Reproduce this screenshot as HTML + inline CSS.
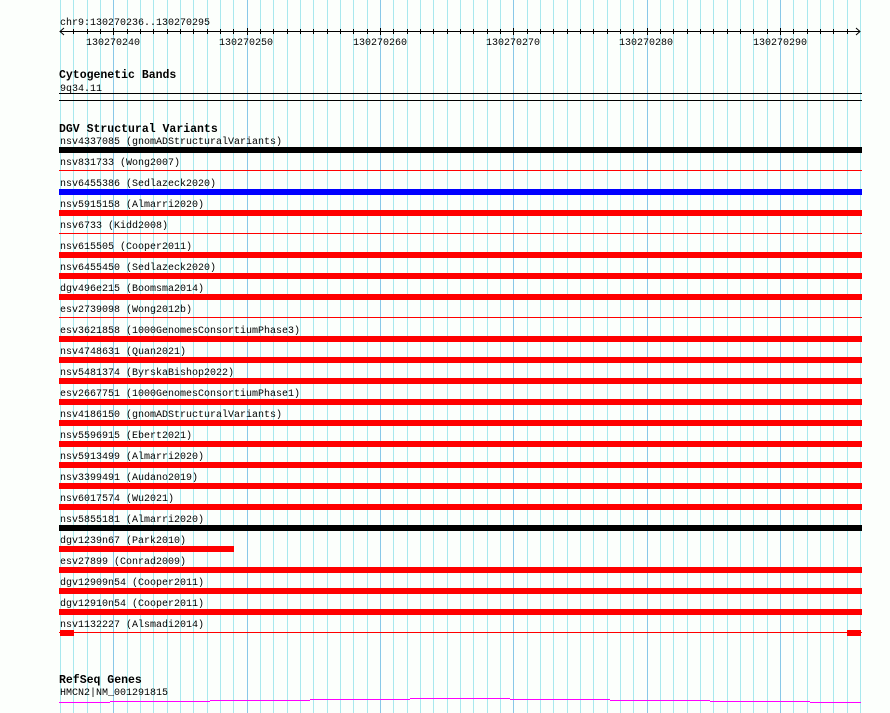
<!DOCTYPE html>
<html><head><style>html,body{margin:0;padding:0;background:#fcfffc;}svg{display:block}
text{font-family:"Liberation Mono",monospace;font-size:10px;fill:#000}
.b{font-weight:bold;font-size:11.5px}</style></head><body>
<svg width="890" height="713" xmlns="http://www.w3.org/2000/svg">
<rect width="890" height="713" fill="#fcfffc"/>
<path stroke="#a8e8ee" stroke-width="1" fill="none" d="M60.5 0V713M73.5 0V713M87.5 0V713M100.5 0V713M127.5 0V713M140.5 0V713M153.5 0V713M167.5 0V713M180.5 0V713M193.5 0V713M207.5 0V713M220.5 0V713M233.5 0V713M260.5 0V713M273.5 0V713M287.5 0V713M300.5 0V713M313.5 0V713M327.5 0V713M340.5 0V713M353.5 0V713M367.5 0V713M393.5 0V713M407.5 0V713M420.5 0V713M433.5 0V713M447.5 0V713M460.5 0V713M473.5 0V713M487.5 0V713M500.5 0V713M527.5 0V713M540.5 0V713M553.5 0V713M567.5 0V713M580.5 0V713M593.5 0V713M607.5 0V713M620.5 0V713M633.5 0V713M660.5 0V713M673.5 0V713M687.5 0V713M700.5 0V713M713.5 0V713M727.5 0V713M740.5 0V713M753.5 0V713M767.5 0V713M793.5 0V713M807.5 0V713M820.5 0V713M833.5 0V713M847.5 0V713M860.5 0V713"/>
<path stroke="#88c8e8" stroke-width="1" fill="none" d="M113.5 0V713M247.5 0V713M380.5 0V713M513.5 0V713M647.5 0V713M780.5 0V713"/>
<path stroke="#000" stroke-width="1" fill="none" d="M73.5 29V34M87.5 29V34M100.5 29V34M127.5 29V34M140.5 29V34M153.5 29V34M167.5 29V34M180.5 29V34M193.5 29V34M207.5 29V34M220.5 29V34M233.5 29V34M260.5 29V34M273.5 29V34M287.5 29V34M300.5 29V34M313.5 29V34M327.5 29V34M340.5 29V34M353.5 29V34M367.5 29V34M393.5 29V34M407.5 29V34M420.5 29V34M433.5 29V34M447.5 29V34M460.5 29V34M473.5 29V34M487.5 29V34M500.5 29V34M527.5 29V34M540.5 29V34M553.5 29V34M567.5 29V34M580.5 29V34M593.5 29V34M607.5 29V34M620.5 29V34M633.5 29V34M660.5 29V34M673.5 29V34M687.5 29V34M700.5 29V34M713.5 29V34M727.5 29V34M740.5 29V34M753.5 29V34M767.5 29V34M793.5 29V34M807.5 29V34M820.5 29V34M833.5 29V34M847.5 29V34M113.5 28V35M247.5 28V35M380.5 28V35M513.5 28V35M647.5 28V35M780.5 28V35"/>
<line x1="60" y1="31.5" x2="860" y2="31.5" stroke="#000"/>
<path d="M64 28 L60 31.5 L64 35 M856 28 L860 31.5 L856 35" stroke="#000" fill="none"/>
<text x="60" y="25">chr9:130270236..130270295</text>
<text x="86" y="45">130270240</text>
<text x="219" y="45">130270250</text>
<text x="353" y="45">130270260</text>
<text x="486" y="45">130270270</text>
<text x="619" y="45">130270280</text>
<text x="753" y="45">130270290</text>

<text class="b" x="59" y="78">Cytogenetic Bands</text>
<text x="60" y="91">9q34.11</text>
<rect x="59" y="93" width="803" height="1" fill="#000"/>
<rect x="59" y="100" width="803" height="1" fill="#000"/>

<text class="b" x="59" y="132">DGV Structural Variants</text>
<text x="60" y="144">nsv4337085 (gnomADStructuralVariants)</text>
<rect x="59" y="147" width="803" height="6" fill="#000"/>
<text x="60" y="165">nsv831733 (Wong2007)</text>
<rect x="59" y="170" width="803" height="1" fill="#f00"/>
<text x="60" y="186">nsv6455386 (Sedlazeck2020)</text>
<rect x="59" y="189" width="803" height="6" fill="#00f"/>
<text x="60" y="207">nsv5915158 (Almarri2020)</text>
<rect x="59" y="210" width="803" height="6" fill="#f00"/>
<text x="60" y="228">nsv6733 (Kidd2008)</text>
<rect x="59" y="233" width="803" height="1" fill="#f00"/>
<text x="60" y="249">nsv615505 (Cooper2011)</text>
<rect x="59" y="252" width="803" height="6" fill="#f00"/>
<text x="60" y="270">nsv6455450 (Sedlazeck2020)</text>
<rect x="59" y="273" width="803" height="6" fill="#f00"/>
<text x="60" y="291">dgv496e215 (Boomsma2014)</text>
<rect x="59" y="294" width="803" height="6" fill="#f00"/>
<text x="60" y="312">esv2739098 (Wong2012b)</text>
<rect x="59" y="317" width="803" height="1" fill="#f00"/>
<text x="60" y="333">esv3621858 (1000GenomesConsortiumPhase3)</text>
<rect x="59" y="336" width="803" height="6" fill="#f00"/>
<text x="60" y="354">nsv4748631 (Quan2021)</text>
<rect x="59" y="357" width="803" height="6" fill="#f00"/>
<text x="60" y="375">nsv5481374 (ByrskaBishop2022)</text>
<rect x="59" y="378" width="803" height="6" fill="#f00"/>
<text x="60" y="396">esv2667751 (1000GenomesConsortiumPhase1)</text>
<rect x="59" y="399" width="803" height="6" fill="#f00"/>
<text x="60" y="417">nsv4186150 (gnomADStructuralVariants)</text>
<rect x="59" y="420" width="803" height="6" fill="#f00"/>
<text x="60" y="438">nsv5596915 (Ebert2021)</text>
<rect x="59" y="441" width="803" height="6" fill="#f00"/>
<text x="60" y="459">nsv5913499 (Almarri2020)</text>
<rect x="59" y="462" width="803" height="6" fill="#f00"/>
<text x="60" y="480">nsv3399491 (Audano2019)</text>
<rect x="59" y="483" width="803" height="6" fill="#f00"/>
<text x="60" y="501">nsv6017574 (Wu2021)</text>
<rect x="59" y="504" width="803" height="6" fill="#f00"/>
<text x="60" y="522">nsv5855181 (Almarri2020)</text>
<rect x="59" y="525" width="803" height="6" fill="#000"/>
<text x="60" y="543">dgv1239n67 (Park2010)</text>
<rect x="59" y="546" width="175" height="6" fill="#f00"/>
<text x="60" y="564">esv27899 (Conrad2009)</text>
<rect x="59" y="567" width="803" height="6" fill="#f00"/>
<text x="60" y="585">dgv12909n54 (Cooper2011)</text>
<rect x="59" y="588" width="803" height="6" fill="#f00"/>
<text x="60" y="606">dgv12910n54 (Cooper2011)</text>
<rect x="59" y="609" width="803" height="6" fill="#f00"/>
<text x="60" y="627">nsv1132227 (Alsmadi2014)</text>
<rect x="59" y="632" width="803" height="1" fill="#f00"/>
<rect x="60" y="630" width="14" height="6" fill="#f00"/>
<rect x="847" y="630" width="14" height="6" fill="#f00"/>

<text class="b" x="59" y="683">RefSeq Genes</text>
<text x="60" y="695">HMCN2|NM_001291815</text>
<path d="M59 702.5H110M110 701.5H210M210 700.5H310M310 699.5H410M410 698.5H510M510 699.5H610M610 700.5H710M710 701.5H810M810 702.5H861" stroke="#f0f" fill="none"/>
</svg>
</body></html>
